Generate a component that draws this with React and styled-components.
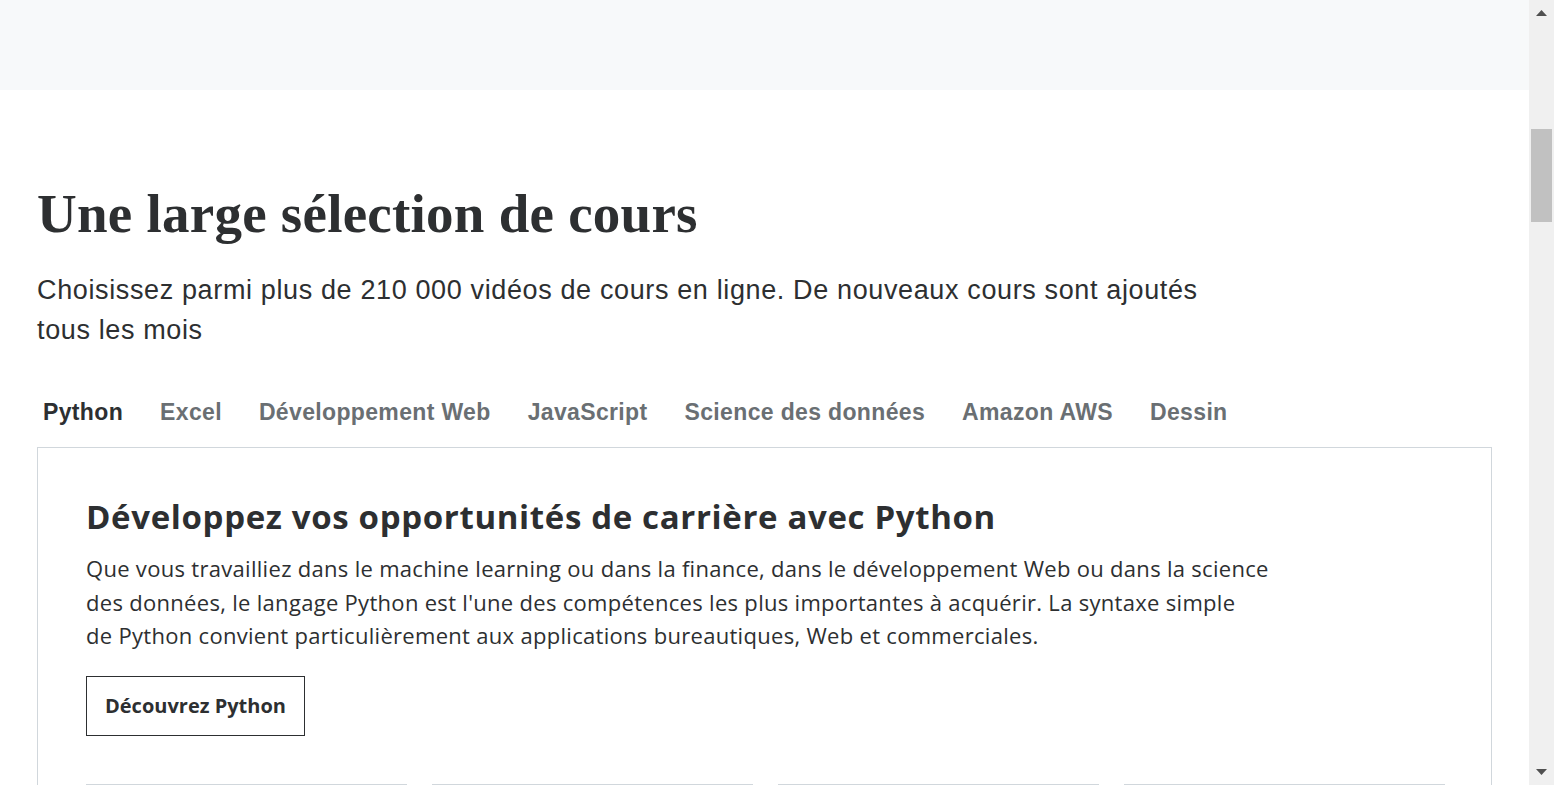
import React, { useState } from 'react';
import styled, { createGlobalStyle } from 'styled-components';

const GlobalStyle = createGlobalStyle`
  html, body {
    margin: 0;
    padding: 0;
    background: #fff;
    color: #2d2f31;
    font-family: "Liberation Sans", Arial, sans-serif;
  }
`;

const Shell = styled.div`
  display: flex;
  align-items: flex-start;
`;

const Page = styled.main`
  flex: 1;
  min-width: 0;
`;

// fake browser scrollbar, the page in the shot is scrolled a bit
const ScrollRail = styled.aside`
  position: sticky;
  top: 0;
  flex: 0 0 25px;
  height: 100vh;
  background: #f0f0f0;
  display: flex;
  flex-direction: column;
  align-items: center;
`;

const RailArrow = styled.div`
  height: 25px;
  width: 100%;
  display: flex;
  align-items: ${p => (p.$down ? 'flex-end' : 'flex-start')};
  justify-content: center;
  padding: ${p => (p.$down ? '0 0 10px' : '10px 0 0')};
  box-sizing: border-box;
`;

const RailTrack = styled.div`
  flex: 1;
  width: 100%;
  padding: 0 2px;
  box-sizing: border-box;
`;

const RailThumb = styled.div`
  margin-top: 104px;
  height: 93px;
  background: #c1c1c1;
`;

const TopBand = styled.div`
  height: 90px;
  background: #f7f9fa;
`;

const Section = styled.section`
  padding: 93px 37px 0;
`;

const Title = styled.h2`
  margin: 0;
  font-family: "Liberation Serif", "Times New Roman", serif;
  font-weight: 700;
  font-size: 55px;
  line-height: 62px;
  letter-spacing: 0.25px;
  color: #2d2f31;
`;

const Lead = styled.p`
  margin: 25px 0 0;
  max-width: 1200px;
  font-size: 27px;
  line-height: 40px;
  letter-spacing: 0.63px;
  color: #2d2f31;
`;

const Tabs = styled.ul`
  display: flex;
  list-style: none;
  margin: 45px 0 0;
  padding: 0 0 0 6px;
  gap: 37px;
`;

const Tab = styled.li`
  font-size: 23px;
  font-weight: 700;
  line-height: 34px;
  letter-spacing: 0.35px;
  cursor: pointer;
  color: ${p => (p.$active ? '#2d2f31' : '#6a6f73')};
`;

const Panel = styled.div`
  margin-top: 18px;
  border: 1px solid #d1d7dc;
  padding: 49px 48px 0;
  min-height: 5400px;
  font-family: "Open Sans", "Liberation Sans", sans-serif;
`;

const PanelTitle = styled.h3`
  margin: 0;
  font-size: 33px;
  line-height: 40px;
  font-weight: 700;
  letter-spacing: 0.65px;
  color: #2d2f31;
`;

const PanelText = styled.p`
  margin: 15px 0 0;
  max-width: 1200px;
  font-size: 22px;
  line-height: 33.5px;
  letter-spacing: 0.3px;
  color: #2d2f31;
`;

const OutlineButton = styled.button`
  margin-top: 23px;
  height: 60px;
  padding: 0 18px;
  border: 1px solid #2d2f31;
  background: #fff;
  font-family: "Open Sans", "Liberation Sans", sans-serif;
  font-size: 20px;
  font-weight: 700;
  color: #2d2f31;
  cursor: pointer;
`;

const CourseRow = styled.div`
  display: grid;
  grid-template-columns: repeat(4, 321px);
  gap: 25px;
  margin-top: 48px;
`;

const CourseThumb = styled.div`
  height: 180px;
  border: 1px solid #d1d7dc;
  background: #fff;
`;

const tabs = [
  'Python',
  'Excel',
  'Développement Web',
  'JavaScript',
  'Science des données',
  'Amazon AWS',
  'Dessin',
];

const Arrow = ({ down }) => (
  <svg width="11" height="6" viewBox="0 0 11 6">
    <path d={down ? 'M0 0h11L5.5 6z' : 'M0 6h11L5.5 0z'} fill="#505050" />
  </svg>
);

export default function App() {
  const [active, setActive] = useState(0);

  return (
    <>
      <GlobalStyle />
      <Shell>
        <Page>
          <TopBand />
          <Section>
            <Title>Une large sélection de cours</Title>
            <Lead>
              Choisissez parmi plus de 210 000 vidéos de cours en ligne. De nouveaux cours sont ajoutés tous les mois
            </Lead>
            <Tabs>
              {tabs.map((t, i) => (
                <Tab key={t} $active={i === active} onClick={() => setActive(i)}>
                  {t}
                </Tab>
              ))}
            </Tabs>
            <Panel>
              <PanelTitle>Développez vos opportunités de carrière avec Python</PanelTitle>
              <PanelText>
                Que vous travailliez dans le machine learning ou dans la finance, dans le développement Web ou dans la science des données, le langage Python est l'une des compétences les plus importantes à acquérir. La syntaxe simple
                <br />
                de Python convient particulièrement aux applications bureautiques, Web et commerciales.
              </PanelText>
              <OutlineButton>Découvrez Python</OutlineButton>
              <CourseRow>
                {[0, 1, 2, 3].map(i => (
                  <CourseThumb key={i} />
                ))}
              </CourseRow>
            </Panel>
          </Section>
        </Page>
        <ScrollRail>
          <RailArrow>
            <Arrow />
          </RailArrow>
          <RailTrack>
            <RailThumb />
          </RailTrack>
          <RailArrow $down>
            <Arrow down />
          </RailArrow>
        </ScrollRail>
      </Shell>
    </>
  );
}
